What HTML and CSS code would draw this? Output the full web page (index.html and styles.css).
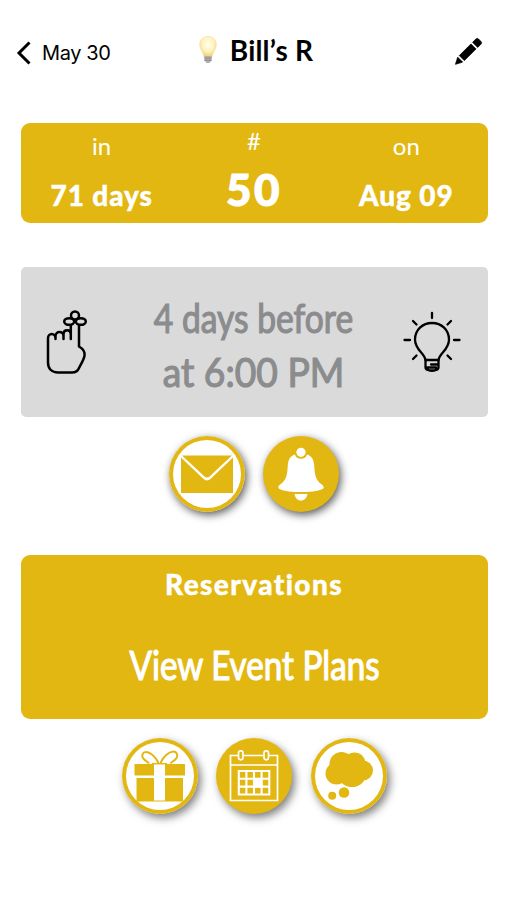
FILE: index.html
```html
<!DOCTYPE html>
<html lang="en">
<head>
    <meta charset="UTF-8">
    <meta name="viewport" content="width=device-width, initial-scale=1.0">
    <title>Bill’s R</title>
    <link rel="stylesheet" href="styles.css">
</head>
<body>
    <header class="navbar">
        <a class="back">
            <svg width="16" height="26" viewBox="0 0 16 26"><path d="M13.5 2.5 3 13l10.5 10.5" fill="none" stroke="#000" stroke-width="3"/></svg>
            <span class="back-label">May 30</span>
        </a>
        <h1 class="title">
            <svg width="20" height="30" viewBox="0 0 20 30">
                <defs>
                    <radialGradient id="glow" cx="50%" cy="38%" r="60%">
                        <stop offset="0" stop-color="#fffef2"/>
                        <stop offset=".6" stop-color="#fff3bd"/>
                        <stop offset="1" stop-color="#f1d27b"/>
                    </radialGradient>
                </defs>
                <path d="M10 1.5c-5 0-8.3 3.6-8.3 8.2 0 4.7 3.5 6.5 4.1 11.8h8.4c.6-5.3 4.1-7.1 4.1-11.8 0-4.6-3.3-8.2-8.3-8.2z" fill="url(#glow)" stroke="#f4dda0" stroke-width=".6"/>
                <path d="M6.3 21h7.4v4.2L11.6 28H8.4l-2.1-2.8z" fill="#b5b4b1"/>
                <path d="M6.3 23h7.4M6.5 25.2h7" stroke="#77736e" stroke-width=".7"/>
            </svg>
            <span class="title-label">Bill’s R</span>
        </h1>
        <a class="edit">
            <svg width="30" height="30" viewBox="0 0 30 30">
                <path d="m1.5 28.3 2.2-7.1 4.9 4.9zM5.3 19.6 17 7.9l5 5L10.3 24.6zM18.6 6.3l3.2-3.2q1.4-1.4 2.8 0l2.3 2.3q1.4 1.4 0 2.8l-3.2 3.2z" stroke="#000" stroke-width=".8"/>
            </svg>
        </a>
    </header>

    <main>
        <section class="card summary">
            <div class="col">
                <div class="label">in</div>
                <div class="value">71 days</div>
            </div>
            <div class="col middle">
                <div class="label">#</div>
                <div class="value">50</div>
            </div>
            <div class="col">
                <div class="label">on</div>
                <div class="value">Aug 09</div>
            </div>
        </section>

        <section class="card reminder">
            <!-- finger with a string bow -->
            <svg width="42" height="66" viewBox="0 0 42 66" fill="none" stroke="#000" stroke-width="2.5" stroke-linecap="round" stroke-linejoin="round">
                <path d="M24.800 17v13M33 17v20.500c4.300 2.500 6.500 5 5.500 9.500-.8 4.200-3.400 7.500-5.500 12-1.200 3-3.500 4.500-7 4.500H12c-6.500 0-10-4-10-10V29.500c0-6 7.500-6 7.500 0V30M9.500 29v-1.500c0-6 8-6 8 0V30M17.500 27v-2c0-5 7.300-5 7.300 0"/>
                <circle cx="29" cy="6.500" r="4"/>
                <ellipse cx="23.200" cy="12.500" rx="5" ry="3.300"/>
                <ellipse cx="34.800" cy="12.500" rx="5" ry="3.300"/>
            </svg>
            <p class="script-text muted">
                <span class="line before">4 days before</span>
                <span class="line time">at 6:00 PM</span>
            </p>
            <!-- idea bulb -->
            <svg width="58" height="62" viewBox="0 0 58 62" fill="none" stroke="#000" stroke-width="2.3" stroke-linecap="round" stroke-linejoin="round">
                <path d="M29 2v5M10 10l3.500 3.500M48 10l-3.500 3.500M1.500 29h5.500M51 29h5.500M10 48l3.500-3.500M48 48l-3.500-3.500"/>
                <path d="M22.500 49c-1-7-10.500-10-10.500-20.500C12 19 19.500 12 29 12s17 7 17 16.500C46 39 36.500 42 35.500 49"/>
                <path d="M22.500 49h13v7.500q0 2-3 2.500-3.500 1.500-7 0-3-.5-3-2.500zM28 53.500h7.500M23 56.500h10M26.500 59.500h5"/>
            </svg>
        </section>

        <div class="actions">
            <button class="round outline" aria-label="Email">
                <svg viewBox="0 0 76 76">
                    <path d="M12 21.500v35.500h52V21.500L42 42.500q-4 3.800-8 0zM13 19.500h50L40.500 40.500q-2.500 2.200-5 0z"/>
                </svg>
            </button>
            <button class="round filled" aria-label="Alert">
                <svg viewBox="0 0 76 76">
                    <path d="M32 18.500c-4.500 1.300-7 5-7.300 12C24.300 43 21 46 16.500 49q-2.500 2.500 0 4C21 55.500 30 56 38 56s17-.5 21.500-3q2.500-1.500 0-4C55 46 51.700 43 51.300 30.500 51 23.500 48.500 19.800 44 18.500c-.6 3-3 4.300-6 4.300s-5.400-1.300-6-4.300z"/>
                    <circle cx="38" cy="16.300" r="4.600"/>
                    <path d="M31.500 58h13c-.8 4.300-3 6.500-6.500 6.500s-5.700-2.200-6.500-6.500z"/>
                </svg>
            </button>
        </div>

        <section class="card plans">
            <h2 class="plans-title">Reservations</h2>
            <p class="script-text"><span class="line link">View Event Plans</span></p>
        </section>

        <div class="actions bottom">
            <button class="round outline" aria-label="Gifts">
                <svg viewBox="0 0 76 76">
                    <path d="M12.500 26h19.500v11.500H12.500zM43 26h20v11.500H43zM14.500 40H32v23.500H14.500zM43 40h18v23.500H43zM31 62.500h13v1H31z"/>
                    <path d="M36.500 25c-3-6.500-8.500-11-12.500-11-3.500 0-4.500 3.500-3 6 1.500 3 4.500 3 6 5.500M38.500 25c3-6.500 8.500-11.500 13-11.500 3.500 0 4.500 4 3 6.500-1.500 3-4.500 3-6 5.500" fill="none" stroke="#e3b711" stroke-width="2"/>
                    <path d="M30 25.700h15" stroke="#e3b711" stroke-width="1.500"/>
                </svg>
            </button>
            <button class="round filled" aria-label="Calendar">
                <svg viewBox="0 0 76 76" fill="none" stroke="#fff" stroke-width="1.700">
                    <path d="M22 17.500h-7.500V62.500h47V17.500H53M27.500 17.500h20M14.500 27h47"/>
                    <rect x="22.500" y="12.800" width="4.500" height="9" rx="2.200"/>
                    <rect x="48" y="12.800" width="4.500" height="9" rx="2.200"/>
                    <path d="M22.800 33h30.500v23.500H22.800zM30.400 33v23.500M38 33v23.500M45.600 33v23.500M22.800 40.800h30.500M22.800 48.600h30.500" stroke-width="2.100"/>
                    <path d="M38 40.800h7.600v7.800H38z" fill="#fff"/>
                </svg>
            </button>
            <button class="round outline" aria-label="Thoughts">
                <svg viewBox="0 0 76 76">
                    <circle cx="25.500" cy="35.500" r="11"/>
                    <circle cx="30.500" cy="26" r="12"/>
                    <circle cx="43.500" cy="25.500" r="11"/>
                    <circle cx="52" cy="32.500" r="10"/>
                    <ellipse cx="41" cy="38.500" rx="13" ry="10.500"/>
                    <circle cx="33" cy="54.500" r="5.300"/>
                    <circle cx="21.200" cy="57.800" r="4"/>
                </svg>
            </button>
        </div>
    </main>
</body>
</html>
```
FILE: styles.css
```css
* {
    box-sizing: border-box;
}
body {
    margin: 0;
    height: 900px;
    background-color: #fff;
    color: #000;
    font-family: Lato, sans-serif;
    font-variant-ligatures: none;
    overflow: hidden;
}
main {
    padding-left: 1px;
}
h1, h2, p {
    margin: 0;
}
svg {
    display: block;
    flex-shrink: 0;
}
.navbar {
    display: grid;
    grid-template-columns: 1fr auto 1fr;
    align-items: center;
    height: 123px;
    padding: 0 23px 21px 16px;
}
.back {
    display: flex;
    align-items: center;
    gap: 10px;
    padding-top: 3px;
    font-family: Inter, sans-serif;
    font-size: 20px;
    line-height: 26px;
    letter-spacing: -0.4px;
}
.title {
    display: flex;
    align-items: center;
    gap: 12px;
    padding: 0 0 3px 11px;
    font-size: 28px;
    line-height: 30px;
    font-weight: 700;
    letter-spacing: 0.2px;
}
.edit {
    justify-self: end;
}
.card {
    width: 467px;
    margin: 0 auto;
    border-radius: 9px;
    background-color: #e3b711;
    color: #fff;
}
.summary {
    display: flex;
    height: 100px;
    padding: 0 5px;
}
.col {
    flex: 1;
    text-align: center;
    padding-top: 8px;
}
.label {
    font-size: 24px;
    line-height: 30px;
}
.value {
    margin-top: 19px;
    font-size: 28px;
    line-height: 30px;
    font-weight: 900;
    letter-spacing: 0.9px;
    -webkit-text-stroke: 0.4px #fff;
}
.middle {
    padding-top: 3px;
}
.middle .value {
    margin-top: 15px;
    font-size: 44px;
    line-height: 36px;
    letter-spacing: 2.5px;
    -webkit-text-stroke: 1px #fff;
}
.reminder {
    display: grid;
    grid-template-columns: 42px 1fr 58px;
    align-items: center;
    height: 150px;
    margin-top: 44px;
    padding: 0 27px 0 25px;
    border-radius: 5px;
    background-color: #dadada;
}
.script-text {
    font-size: 40px;
    line-height: 54px;
    text-align: center;
    white-space: nowrap;
    -webkit-text-stroke: 1.2px currentColor;
}
.muted {
    padding: 6px 0 0 16px;
    color: #8b8c8e;
}
.line {
    display: block;
    transform: scaleX(0.84);
}
.time {
    transform: scaleX(0.93);
}
.actions {
    display: flex;
    justify-content: center;
    gap: 18.5px;
    margin-top: 19px;
}
.round {
    width: 76px;
    height: 76px;
    padding: 0;
    border: 0;
    border-radius: 50%;
    box-shadow: 2px 3px 9px rgba(0,0,0,0.65);
}
.outline {
    background-color: #fff;
    box-shadow: inset 0 0 0 4px #e3b711, 2px 3px 9px rgba(0,0,0,0.65);
    fill: #e3b711;
}
.filled {
    background-color: #e3b711;
    fill: #fff;
}
.plans {
    height: 164px;
    margin-top: 43px;
    padding-top: 13px;
}
.plans-title {
    font-size: 28px;
    line-height: 32px;
    font-weight: 900;
    text-align: center;
    letter-spacing: 1.4px;
    -webkit-text-stroke: 0.4px #fff;
}
.plans .script-text {
    margin-top: 38px;
}
.plans .link {
    transform: scaleX(0.83);
}
.bottom .round {
    box-shadow: 3px 4px 8px rgba(0,0,0,0.5);
}
.bottom .outline {
    box-shadow: inset 0 0 0 4px #e3b711, 3px 4px 8px rgba(0,0,0,0.5);
}
```
